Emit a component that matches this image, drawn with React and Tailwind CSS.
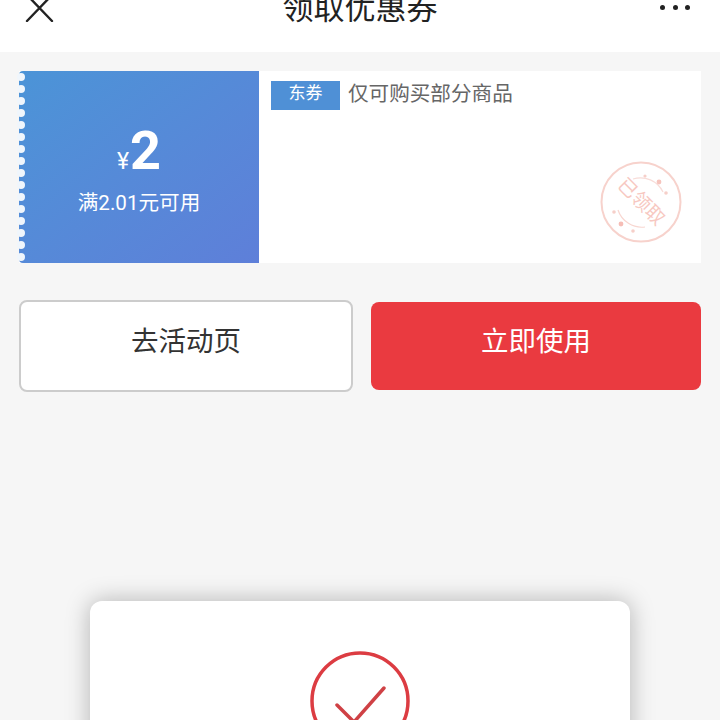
import React from "react";

const font = { fontFamily: '"Roboto", "Noto Sans CJK SC", sans-serif' };

const Stamp = () => (
  <svg className="h-[84px] w-[84px]" viewBox="0 0 84 84" fill="none">
    <circle cx="42" cy="42" r="39.5" stroke="#f7d2cc" strokeWidth="2" />
    <path d="M34 19a25 25 0 0 1 30 13" stroke="#f8dcd8" strokeWidth="1.2" />
    <path d="M19 50a25 25 0 0 0 27 17" stroke="#f8d6d0" strokeWidth="1.2" />
    <circle cx="46" cy="16" r="1.6" fill="#f6cfc9" />
    <circle cx="60" cy="22" r="2.4" fill="#f6c4bd" />
    <circle cx="67" cy="33" r="1.8" fill="#f6cfc9" />
    <circle cx="15" cy="52" r="1.8" fill="#f6cfc9" />
    <circle cx="22" cy="64" r="2.4" fill="#f6bdb6" />
    <circle cx="34" cy="71" r="1.8" fill="#f6cfc9" />
    <text x="42" y="48" textAnchor="middle" fontSize="19" fill="#f7c8c1" transform="rotate(45 42 42)" style={font}>已领取</text>
  </svg>
);

export default function App() {
  return (
    <div className="relative h-[720px] w-[720px] overflow-hidden bg-[#f6f6f6]" style={font}>
      <header className="flex h-[52px] items-start justify-between overflow-hidden bg-white pl-[25px] pr-[30px]">
        <svg className="mt-[-6px] h-[28px] w-[30px]" viewBox="0 0 30 28" fill="none" stroke="#222" strokeWidth="2.4" strokeLinecap="round">
          <path d="M2 1l25 26M27 1L2 27" />
        </svg>
        <h1 className="ml-[5px] mt-[-11px] text-[31px] leading-[40px] font-normal text-[#222]">领取优惠券</h1>
        <div className="mt-[5px] flex w-[30px] justify-between">
          <span className="h-[5px] w-[5px] rounded-full bg-[#222]" />
          <span className="h-[5px] w-[5px] rounded-full bg-[#222]" />
          <span className="h-[5px] w-[5px] rounded-full bg-[#222]" />
        </div>
      </header>

      <main className="pl-[19px] pr-[19px] pt-[19px]">
        <section className="flex h-[192px] bg-white">
          <div className="relative flex w-[240px] flex-col items-center justify-center rounded-l-[4px] bg-gradient-to-br from-[#4b94d7] to-[#5e7fd9] text-white">
            <div className="absolute bottom-0 left-[-2px] top-0 flex flex-col justify-around">
              {Array.from({ length: 16 }).map((_, i) => (
                <span key={i} className="h-[8px] w-[8px] rounded-full bg-[#f0f6fc]" />
              ))}
            </div>
            <div className="mt-[6px] flex items-baseline">
              <span className="text-[23px] leading-none">¥</span>
              <span className="ml-[1px] text-[54px] font-bold leading-[56px]">2</span>
            </div>
            <p className="mt-[10px] text-[20.6px] leading-[28px]">满2.01元可用</p>
          </div>
          <div className="flex flex-1 flex-col pl-[12px] pr-[19px]">
            <div className="flex items-start">
              <span className="mt-[10px] flex h-[29px] w-[69px] items-center justify-center bg-[#4f90d6] pb-[3px] text-[17px] text-white">东券</span>
              <span className="ml-[8px] mt-[8px] text-[20.6px] leading-[30px] text-[#666]">仅可购买部分商品</span>
            </div>
            <div className="mr-[-1px] mt-[50px] flex justify-end">
              <Stamp />
            </div>
          </div>
        </section>

        <div className="mt-[37px] flex items-center gap-[18px]">
          <button className="h-[92px] w-[334px] rounded-[8px] border-2 border-[#cccccc] bg-white pb-[8px] text-[27.5px] text-[#333]">去活动页</button>
          <button className="h-[88px] w-[330px] rounded-[8px] bg-[#ea3a40] pb-[8px] text-[27.5px] text-white">立即使用</button>
        </div>
      </main>

      {/* toast over the page, cut by the window */}
      <div className="absolute left-[90px] top-[601px] flex h-[200px] w-[540px] justify-center rounded-[12px] bg-white pt-[50px] shadow-[0_0_24px_rgba(0,0,0,0.28)]">
        <svg className="h-[100px] w-[100px]" viewBox="0 0 100 100" fill="none">
          <circle cx="50" cy="50" r="48" stroke="#dc3c42" strokeWidth="3.5" />
          <path d="M27 54l17 17 30-34" stroke="#cf4145" strokeWidth="3.5" strokeLinecap="round" strokeLinejoin="round" />
        </svg>
      </div>
    </div>
  );
}
